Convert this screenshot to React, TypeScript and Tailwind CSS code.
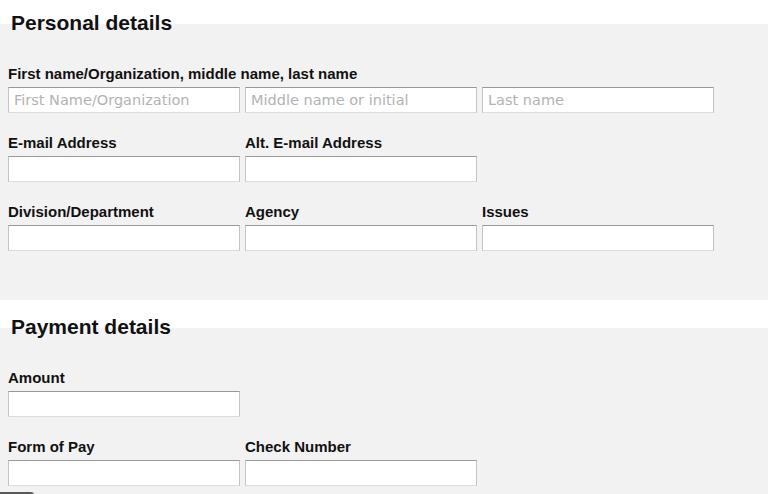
import React from "react";

const inputCls =
  "h-[26px] w-[232px] bg-white border border-[#c4c4c4] border-t-[#999] border-b-[#dcdcdc] px-[5px] text-[14.5px] text-[#333] placeholder:text-[#b3b3b3] outline-none font-['DejaVu_Sans',sans-serif]";
const labelCls = "h-[16px] leading-[16px] text-[15px] font-bold text-[#111] mb-[5px] whitespace-nowrap";

function Field({ label, placeholder }: { label?: string; placeholder?: string }) {
  return (
    <div className="flex flex-col">
      <div className={labelCls}>{label}</div>
      <input className={inputCls} placeholder={placeholder} />
    </div>
  );
}

function Heading({ children }: { children: React.ReactNode }) {
  return (
    <h2 className="-mt-[14px] pl-[11px] h-[26px] leading-[26px] text-[21px] font-bold text-[#111]">
      {children}
    </h2>
  );
}

export default function App() {
  return (
    <div className="w-[768px] h-[494px] overflow-hidden bg-white flex flex-col font-['Liberation_Sans',Arial,sans-serif]">
      <section className="flow-root mt-[24px] h-[276px] shrink-0 bg-[#f2f2f2]">
        <Heading>Personal details</Heading>
        <div className="pl-[8px] pt-[30px] flex flex-col gap-[22px]">
          <div className="flex flex-col">
            <div className={labelCls}>First name/Organization, middle name, last name</div>
            <div className="flex gap-[5px]">
              <input className={inputCls} placeholder="First Name/Organization" />
              <input className={inputCls} placeholder="Middle name or initial" />
              <input className={inputCls} placeholder="Last name" />
            </div>
          </div>
          <div className="flex gap-[5px]">
            <Field label="E-mail Address" />
            <Field label="Alt. E-mail Address" />
          </div>
          <div className="flex gap-[5px]">
            <Field label="Division/Department" />
            <Field label="Agency" />
            <Field label="Issues" />
          </div>
        </div>
      </section>
      <section className="flow-root mt-[28px] flex-1 bg-[#f2f2f2]">
        <Heading>Payment details</Heading>
        <div className="pl-[8px] pt-[30px] flex flex-col gap-[22px]">
          <div className="flex gap-[5px]">
            <Field label="Amount" />
          </div>
          <div className="flex gap-[5px]">
            <Field label="Form of Pay" />
            <Field label="Check Number" />
          </div>
        </div>
        <div className="mt-[6px] h-[20px] w-[34px] rounded-tr-[3px] bg-[#5a5a5a]" />
      </section>
    </div>
  );
}
